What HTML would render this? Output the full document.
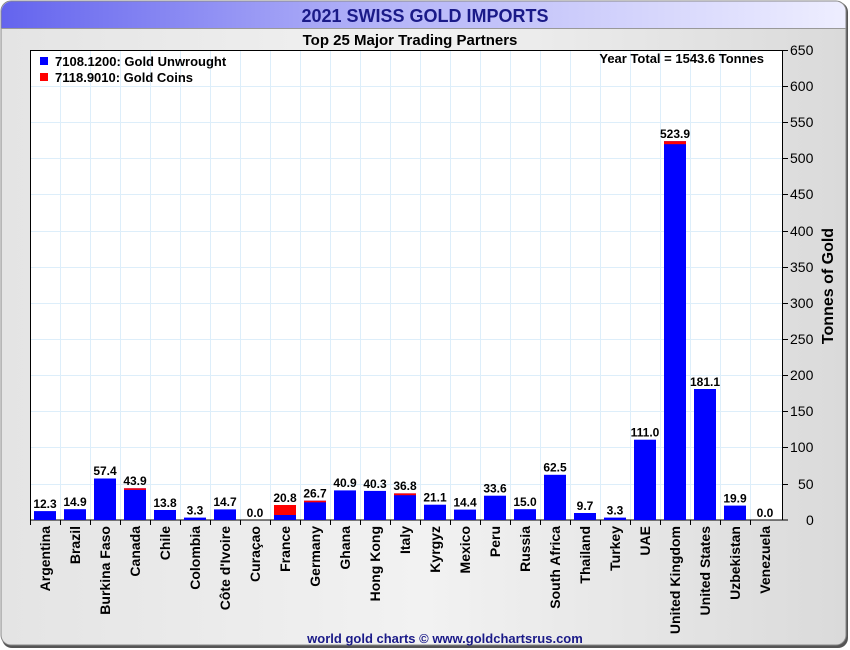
<!DOCTYPE html>
<html><head><meta charset="utf-8"><style>
body{margin:0;width:850px;height:650px;background:#fff;overflow:hidden}
svg{display:block;font-family:"Liberation Sans",Arial,sans-serif}
</style></head><body>
<svg width="850" height="650" viewBox="0 0 850 650">
<defs>
<linearGradient id="tb" x1="0" x2="1" y1="0" y2="0"><stop offset="0" stop-color="#6464ee"/><stop offset="0.45" stop-color="#b4b4f8"/><stop offset="1" stop-color="#eeeeff"/></linearGradient>
<linearGradient id="bg" x1="0" x2="1" y1="0" y2="0"><stop offset="0" stop-color="#e4e4e4"/><stop offset="0.5" stop-color="#f2f2f2"/><stop offset="1" stop-color="#dadada"/></linearGradient>
</defs>
<rect x="2" y="2" width="846" height="646" rx="10" fill="#555"/>
<rect x="1" y="1" width="845" height="644" rx="10" fill="url(#bg)" stroke="#888" stroke-width="1"/>
<path d="M1.5 28 V11 A10 10 0 0 1 11.5 1.5 H835 A10 10 0 0 1 845.5 11 V28 Z" fill="url(#tb)"/>
<line x1="1" y1="28.5" x2="846" y2="28.5" stroke="#999"/>
<text x="425" y="22" text-anchor="middle" font-size="18" font-weight="bold" fill="#1a1a88">2021 SWISS GOLD IMPORTS</text>
<text x="410" y="45" text-anchor="middle" font-size="15" font-weight="bold" fill="#000">Top 25 Major Trading Partners</text>
<rect x="30.5" y="50.5" width="752" height="469.5" fill="#fff" stroke="#000"/>
<g stroke="#ddeefa" stroke-width="1">
<path d="M60.5 51V520M90.5 51V520M120.5 51V520M150.5 51V520M180.5 51V520M210.5 51V520M240.5 51V520M270.5 51V520M300.5 51V520M330.5 51V520M360.5 51V520M390.5 51V520M420.5 51V520M450.5 51V520M480.5 51V520M510.5 51V520M540.5 51V520M570.5 51V520M600.5 51V520M630.5 51V520M660.5 51V520M690.5 51V520M720.5 51V520M750.5 51V520"/>
<path d="M31 86.5H782M31 122.5H782M31 158.5H782M31 194.5H782M31 231.5H782M31 267.5H782M31 303.5H782M31 339.5H782M31 375.5H782M31 411.5H782M31 447.5H782M31 484.5H782"/>
</g>
<rect x="30.5" y="50.5" width="752" height="469.5" fill="none" stroke="#000"/>
<rect x="40" y="57" width="8" height="8" fill="#0000ff"/>
<rect x="40" y="73" width="8" height="8" fill="#ff0000"/>
<g font-size="13" font-weight="bold" fill="#000">
<text x="55" y="66">7108.1200: Gold Unwrought</text>
<text x="55" y="82">7118.9010: Gold Coins</text>
<text x="764" y="63" text-anchor="end">Year Total = 1543.6 Tonnes</text>
</g>
<g fill="#0000ff">
<rect x="34" y="511.1" width="22" height="8.9"/>
<rect x="64" y="509.2" width="22" height="10.8"/>
<rect x="94" y="478.5" width="22" height="41.5"/>
<rect x="124" y="488.3" width="22" height="31.7"/>
<rect x="154" y="510" width="22" height="10"/>
<rect x="184" y="517.6" width="22" height="2.4"/>
<rect x="214" y="509.4" width="22" height="10.6"/>
<rect x="274" y="505" width="22" height="15"/>
<rect x="304" y="500.7" width="22" height="19.3"/>
<rect x="334" y="490.4" width="22" height="29.6"/>
<rect x="364" y="490.9" width="22" height="29.1"/>
<rect x="394" y="493.4" width="22" height="26.6"/>
<rect x="424" y="504.7" width="22" height="15.3"/>
<rect x="454" y="509.6" width="22" height="10.4"/>
<rect x="484" y="495.7" width="22" height="24.3"/>
<rect x="514" y="509.2" width="22" height="10.8"/>
<rect x="544" y="474.8" width="22" height="45.2"/>
<rect x="574" y="513" width="22" height="7"/>
<rect x="604" y="517.6" width="22" height="2.4"/>
<rect x="634" y="439.7" width="22" height="80.3"/>
<rect x="664" y="141.2" width="22" height="378.8"/>
<rect x="694" y="389" width="22" height="131"/>
<rect x="724" y="505.6" width="22" height="14.4"/>
</g>
<g fill="#ff0000">
<rect x="124" y="488.3" width="22" height="1.6"/>
<rect x="274" y="505" width="22" height="10"/>
<rect x="304" y="500.7" width="22" height="1.6"/>
<rect x="394" y="493.4" width="22" height="1.8"/>
<rect x="664" y="141.2" width="22" height="3"/>
</g>
<g font-size="12" font-weight="bold" text-anchor="middle" fill="#000">
<text x="45" y="508">12.3</text><text x="75" y="506">14.9</text><text x="105" y="475">57.4</text><text x="135" y="485">43.9</text><text x="165" y="507">13.8</text><text x="195" y="514.5">3.3</text><text x="225" y="506">14.7</text><text x="255" y="517">0.0</text><text x="285" y="502">20.8</text><text x="315" y="497.5">26.7</text><text x="345" y="487">40.9</text><text x="375" y="488">40.3</text><text x="405" y="490">36.8</text><text x="435" y="501.5">21.1</text><text x="465" y="506.5">14.4</text><text x="495" y="492.5">33.6</text><text x="525" y="506">15.0</text><text x="555" y="471.5">62.5</text><text x="585" y="510">9.7</text><text x="615" y="514.5">3.3</text><text x="645" y="436.5">111.0</text><text x="675" y="138">523.9</text><text x="705" y="386">181.1</text><text x="735" y="502.5">19.9</text><text x="765" y="517">0.0</text>
</g>
<path stroke="#000" d="M30.5 520V525M60.5 520V525M90.5 520V525M120.5 520V525M150.5 520V525M180.5 520V525M210.5 520V525M240.5 520V525M270.5 520V525M300.5 520V525M330.5 520V525M360.5 520V525M390.5 520V525M420.5 520V525M450.5 520V525M480.5 520V525M510.5 520V525M540.5 520V525M570.5 520V525M600.5 520V525M630.5 520V525M660.5 520V525M690.5 520V525M720.5 520V525M750.5 520V525M782 50.5H788M782 86.5H788M782 122.5H788M782 158.5H788M782 194.5H788M782 231.5H788M782 267.5H788M782 303.5H788M782 339.5H788M782 375.5H788M782 411.5H788M782 447.5H788M782 484.5H788M782 520H788"/>
<g font-size="14" fill="#000">
<text x="790" y="55">650</text><text x="790" y="91">600</text><text x="790" y="127">550</text><text x="790" y="163">500</text><text x="790" y="199">450</text><text x="790" y="236">400</text><text x="790" y="272">350</text><text x="790" y="308">300</text><text x="790" y="344">250</text><text x="790" y="380">200</text><text x="790" y="416">150</text><text x="790" y="452">100</text><text x="798" y="489">50</text><text x="806" y="525">0</text>
</g>
<text transform="translate(833,286) rotate(-90)" text-anchor="middle" font-size="16" font-weight="bold" fill="#000">Tonnes of Gold</text>
<g font-size="14" font-weight="bold" fill="#000" text-anchor="end">
<text transform="translate(50,526) rotate(-90)">Argentina</text>
<text transform="translate(80,526) rotate(-90)">Brazil</text>
<text transform="translate(110,526) rotate(-90)">Burkina Faso</text>
<text transform="translate(140,526) rotate(-90)">Canada</text>
<text transform="translate(170,526) rotate(-90)">Chile</text>
<text transform="translate(200,526) rotate(-90)">Colombia</text>
<text transform="translate(230,526) rotate(-90)">Côte d'Ivoire</text>
<text transform="translate(260,526) rotate(-90)">Curaçao</text>
<text transform="translate(290,526) rotate(-90)">France</text>
<text transform="translate(320,526) rotate(-90)">Germany</text>
<text transform="translate(350,526) rotate(-90)">Ghana</text>
<text transform="translate(380,526) rotate(-90)">Hong Kong</text>
<text transform="translate(410,526) rotate(-90)">Italy</text>
<text transform="translate(440,526) rotate(-90)">Kyrgyz</text>
<text transform="translate(470,526) rotate(-90)">Mexico</text>
<text transform="translate(500,526) rotate(-90)">Peru</text>
<text transform="translate(530,526) rotate(-90)">Russia</text>
<text transform="translate(560,526) rotate(-90)">South Africa</text>
<text transform="translate(590,526) rotate(-90)">Thailand</text>
<text transform="translate(620,526) rotate(-90)">Turkey</text>
<text transform="translate(650,526) rotate(-90)">UAE</text>
<text transform="translate(680,526) rotate(-90)">United Kingdom</text>
<text transform="translate(710,526) rotate(-90)">United States</text>
<text transform="translate(740,526) rotate(-90)">Uzbekistan</text>
<text transform="translate(770,526) rotate(-90)">Venezuela</text>
</g>
<text x="445" y="643" text-anchor="middle" font-size="13" font-weight="bold" fill="#1a1a88">world gold charts © www.goldchartsrus.com</text>
</svg>
</body></html>
